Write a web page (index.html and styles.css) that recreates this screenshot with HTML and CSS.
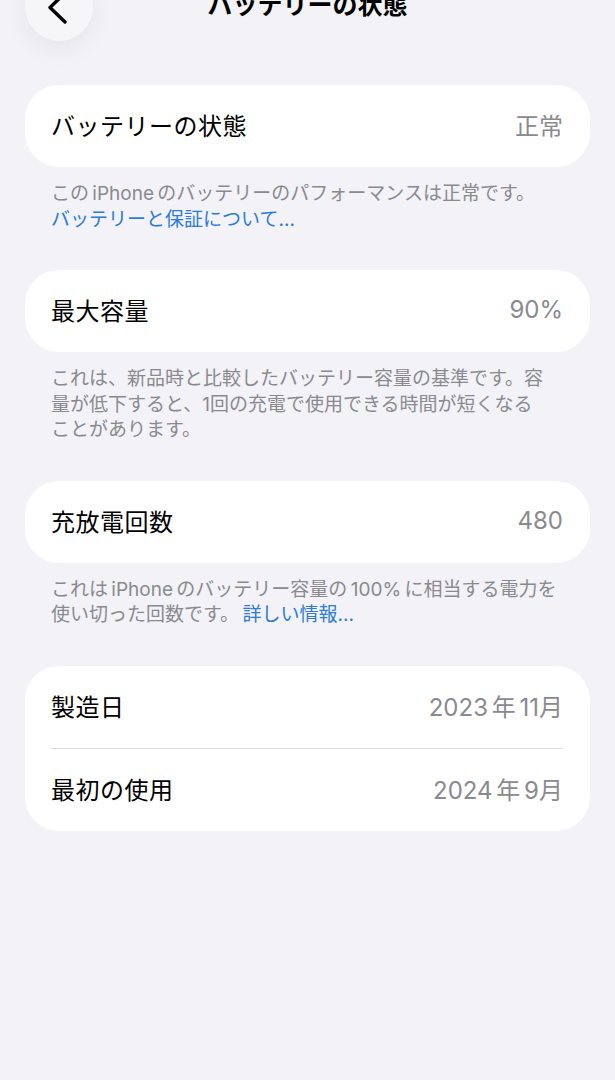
FILE: index.html
```html
<!DOCTYPE html>
<html lang="ja">
<head>
<meta charset="utf-8">
<title>バッテリーの状態</title>
<link rel="stylesheet" href="styles.css">
</head>
<body>
<header class="nav">
  <button class="back" aria-label="戻る">
    <svg width="68" height="68" viewBox="0 0 68 68"><path d="M40 20 L25 34.5 L40 49" fill="none" stroke="#000" stroke-width="3.4" stroke-linecap="round" stroke-linejoin="round"/></svg>
  </button>
  <h1 class="title">バッテリーの状態</h1>
  <div></div>
</header>
<main class="content">
  <section class="group">
    <div class="card">
      <div class="row"><span class="label">バッテリーの状態</span><span class="value">正常</span></div>
    </div>
    <p class="footer">この iPhone のバッテリーのパフォーマンスは正常です。<br><a class="link">バッテリーと保証について...</a></p>
  </section>
  <section class="group">
    <div class="card">
      <div class="row"><span class="label">最大容量</span><span class="value">90%</span></div>
    </div>
    <p class="footer">これは、新品時と比較したバッテリー容量の基準です。容<br>量が低下すると、1回の充電で使用できる時間が短くなる<br>ことがあります。</p>
  </section>
  <section class="group">
    <div class="card">
      <div class="row"><span class="label">充放電回数</span><span class="value">480</span></div>
    </div>
    <p class="footer">これは iPhone のバッテリー容量の 100% に相当する電力を<br>使い切った回数です。 <a class="link">詳しい情報...</a></p>
  </section>
  <section class="group">
    <div class="card">
      <div class="row"><span class="label">製造日</span><span class="value">2023 年 11月</span></div>
      <div class="divider"></div>
      <div class="row"><span class="label">最初の使用</span><span class="value">2024 年 9月</span></div>
    </div>
  </section>
</main>
</body>
</html>
```
FILE: styles.css
```css
html, body {
  margin: 0;
  padding: 0;
  background: #f2f2f7;
}
body {
  font-family: Inter, "Noto Sans CJK JP", sans-serif;
  color: #000;
}
.nav {
  display: grid;
  grid-template-columns: 1fr auto 1fr;
  align-items: start;
  height: 112px;
  margin-top: -27px;
}
.back {
  justify-self: start;
  margin: 0 0 0 25px;
  width: 68px;
  height: 68px;
  padding: 0;
  border: none;
  border-radius: 50%;
  background: #f6f6f8;
  box-shadow: 0 8px 26px rgba(0, 0, 0, 0.06);
  display: block;
}
.back svg {
  display: block;
}
.title {
  margin: 20px 0 0;
  font-size: 25px;
  line-height: 25px;
  font-weight: 700;
  white-space: nowrap;
}
.content {
  padding: 0 25px;
}
.group {
  margin: 0 0 38px;
}
.card {
  background: #fff;
  border-radius: 34px;
}
.row {
  height: 82px;
  box-sizing: border-box;
  display: flex;
  align-items: center;
  justify-content: space-between;
  padding: 0 27px 3px 26px;
}
.label {
  font-size: 24px;
  letter-spacing: 0.5px;
  color: #000;
}
.value {
  font-size: 24px;
  color: #8a8a8e;
  white-space: nowrap;
  word-spacing: -3px;
}
.divider {
  height: 1px;
  background: #dcdce0;
  margin: 0 27px 0 26px;
}
.footer {
  margin: 14px 0 0;
  padding: 0 26px;
  font-size: 19px;
  line-height: 25.5px;
  color: #8a8a8e;
  white-space: nowrap;
  word-spacing: -2px;
}
.link {
  color: #2c7bd6;
  text-decoration: none;
}
```
